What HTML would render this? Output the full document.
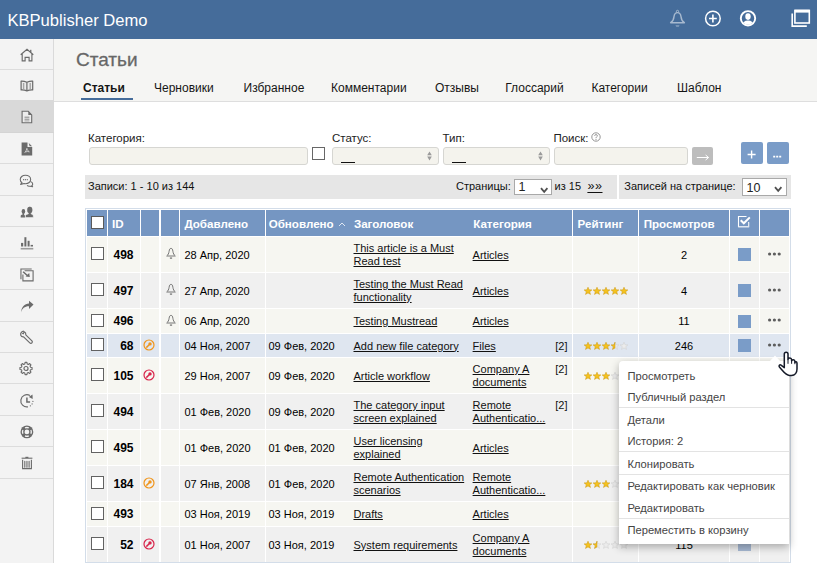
<!DOCTYPE html>
<html><head><meta charset="utf-8">
<style>
*{box-sizing:border-box;margin:0;padding:0}
html,body{width:817px;height:563px;overflow:hidden;background:#fff;font-family:"Liberation Sans",sans-serif;color:#000}
.a{position:absolute}
.t{position:absolute;white-space:nowrap;line-height:1}
svg{position:absolute;overflow:visible}
.u{text-decoration:underline;text-underline-offset:1px}
</style></head><body>
<div class="a" style="left:0;top:0;width:817px;height:39px;background:#456c9a"></div>
<div class="t " style="left:7.4px;top:13.35px;font-size:16.6px;color:#fff">KBPublisher Demo</div>
<svg style="left:669px;top:9px" width="17" height="19" viewBox="0 0 17 19"><circle cx="8.5" cy="2.4" r="1.1" fill="none" stroke="#a7b9cf" stroke-width="1"/><path d="M8.5 3.6 C6.3 3.6 5.3 5.2 5 7.6 C4.7 10.6 4.3 12.2 1.6 13.7 H15.4 C12.7 12.2 12.3 10.6 12 7.6 C11.7 5.2 10.7 3.6 8.5 3.6Z" fill="none" stroke="#a7b9cf" stroke-width="1.4" stroke-linejoin="round"/><path d="M6.5 16.4 H10.5 C10 18 7 18 6.5 16.4Z" fill="#a7b9cf"/></svg>
<svg style="left:704px;top:10px" width="18" height="18" viewBox="0 0 18 18"><circle cx="8.9" cy="8.5" r="7.3" fill="none" stroke="#fff" stroke-width="1.5"/><path d="M8.9 4.6 V12.4 M5 8.5 H12.8" stroke="#fff" stroke-width="1.6"/></svg>
<svg style="left:739px;top:9px" width="18" height="19" viewBox="0 0 18 19"><defs><clipPath id="uc"><circle cx="9" cy="9.3" r="6.4"/></clipPath></defs><circle cx="9" cy="9.3" r="7.2" fill="none" stroke="#fff" stroke-width="1.9"/><g clip-path="url(#uc)"><ellipse cx="9" cy="7.6" rx="2.7" ry="3.3" fill="#fff"/><ellipse cx="9" cy="16.6" rx="6" ry="5" fill="#fff"/></g></svg>
<svg style="left:791px;top:9px" width="19" height="19" viewBox="0 0 19 19"><rect x="3.9" y="1.4" width="14.4" height="12.6" fill="none" stroke="#fff" stroke-width="1.6"/><rect x="3.9" y="0.8" width="14.4" height="2.8" fill="#fff"/><path d="M1.2 4.5 V17.1 H15.8" fill="none" stroke="#fff" stroke-width="1.6"/></svg>
<div class="a" style="left:0;top:39px;width:54px;height:524px;background:#f3f3f3;border-right:1px solid #dadada"></div>
<div class="a" style="left:0;top:69px;width:53px;height:1px;background:#dcdcdc"></div>
<div class="a" style="left:0;top:100px;width:54px;height:33px;border-bottom:1px solid #d4d4d4;background:#d9d9d9"></div>
<div class="a" style="left:0;top:163px;width:53px;height:1px;background:#dcdcdc"></div>
<div class="a" style="left:0;top:195px;width:53px;height:1px;background:#dcdcdc"></div>
<div class="a" style="left:0;top:226px;width:53px;height:1px;background:#dcdcdc"></div>
<div class="a" style="left:0;top:257px;width:53px;height:1px;background:#dcdcdc"></div>
<div class="a" style="left:0;top:289px;width:53px;height:1px;background:#dcdcdc"></div>
<div class="a" style="left:0;top:321px;width:53px;height:1px;background:#dcdcdc"></div>
<div class="a" style="left:0;top:352px;width:53px;height:1px;background:#dcdcdc"></div>
<div class="a" style="left:0;top:383px;width:53px;height:1px;background:#dcdcdc"></div>
<div class="a" style="left:0;top:415px;width:53px;height:1px;background:#dcdcdc"></div>
<div class="a" style="left:0;top:446px;width:53px;height:1px;background:#dcdcdc"></div>
<div class="a" style="left:0;top:478px;width:53px;height:1px;background:#dcdcdc"></div>
<svg style="left:19.50px;top:47.50px" width="14" height="14" viewBox="0 0 14 14"><path d="M0.7 6.8 L7 1.2 L13.3 6.8 M2.2 5.6 V12.8 H5.1 V9.3 H9.1 V12.8 H11.9 V5.6" fill="none" stroke="#6b6b6b" stroke-width="1.15" stroke-linejoin="miter"/><rect x="10.1" y="1.8" width="1.3" height="2.6" fill="#6b6b6b"/></svg>
<svg style="left:19.50px;top:79.35px" width="14" height="14" viewBox="0 0 14 14"><path d="M1.1 2.1 C2.8 2 5.1 2.4 6.9 3.2 V11.9 C5.1 11.2 2.8 10.9 1.1 11Z M12.7 2.1 C11 2 8.7 2.4 6.9 3.2 V11.9 C8.7 11.2 11 10.9 12.7 11Z" fill="#ececec" stroke="#6b6b6b" stroke-width="1.2" stroke-linejoin="round"/><path d="M3.6 3.9 V10 M10.2 3.9 V10" stroke="#a5a5a5" stroke-width="1.4"/></svg>
<svg style="left:19.50px;top:110.40px" width="14" height="14" viewBox="0 0 14 14"><path d="M2.1 1.2 H8.3 L11.7 4.9 V12.8 H2.1 Z" fill="#ececec" stroke="#6b6b6b" stroke-width="1.1" stroke-linejoin="miter"/><path d="M8.3 1.2 V4.9 H11.7Z" fill="#6b6b6b"/><path d="M4.5 7.2 H9.4 M4.5 9.2 H9.4" stroke="#7a7a7a" stroke-width="0.9"/><path d="M4.5 10.9 H9.4" stroke="#b0b0b0" stroke-width="1.2"/></svg>
<svg style="left:19.50px;top:141.85px" width="14" height="14" viewBox="0 0 14 14"><path d="M1.6 0.6 H7.5 V4.95 H12.2 V13.6 H1.6Z" fill="#6b6b6b"/><path d="M8.7 0.9 L12.1 4.2 H9.6 Z" fill="#6b6b6b"/><path d="M6.9 6.3 C6.6 8 5.8 9.6 4.7 10.8 M5.6 9.9 C6.8 9.5 8.2 9.4 9.3 9.8 M6.9 6.3 C7.2 7.8 8 9 9.3 9.8" fill="none" stroke="#e0e0e0" stroke-width="0.8"/></svg>
<svg style="left:19.00px;top:173.60px" width="15" height="14" viewBox="0 0 15 14"><path d="M6.45 1.3 C3.4 1.3 1.25 3.2 1.25 5.5 C1.25 6.9 1.9 8 3 8.7 L1.6 10.4 L5.2 9.5 C5.6 9.6 6 9.7 6.45 9.7 C9.5 9.7 11.65 7.8 11.65 5.5 C11.65 3.2 9.5 1.3 6.45 1.3Z" fill="none" stroke="#6b6b6b" stroke-width="1.1" stroke-linejoin="round"/><path d="M11.4 7.6 C12.9 8.1 13.7 9 13.7 10 C13.7 10.9 13.3 11.5 12.8 11.9 L13.6 12.6 L11 12.2 C9.8 12.4 8.6 12 8.2 11.3" fill="none" stroke="#6b6b6b" stroke-width="1.1" stroke-linejoin="round"/><circle cx="4.6" cy="5.7" r="0.65" fill="#6b6b6b"/><circle cx="6.45" cy="5.7" r="0.65" fill="#6b6b6b"/><circle cx="8.3" cy="5.7" r="0.65" fill="#6b6b6b"/></svg>
<svg style="left:19.50px;top:204.75px" width="14" height="14" viewBox="0 0 14 14"><ellipse cx="3.4" cy="6.4" rx="1.8" ry="2.3" fill="#6b6b6b"/><path d="M2.6 8 V9.6 C1.4 9.8 0.7 10.3 0.7 11 V12.6 H5 V11 C5 10.4 4.6 10 4.1 9.7 V8Z" fill="#6b6b6b"/><ellipse cx="9.8" cy="5" rx="2.5" ry="3.2" fill="#6b6b6b" stroke="#f3f3f3" stroke-width="0.6"/><path d="M8.3 7.2 V9 C6.4 9.3 5.4 10 5.4 11 V12.6 H13.3 V11 C13.3 10 12.3 9.3 11.2 9 V7.2Z" fill="#6b6b6b" stroke="#f3f3f3" stroke-width="0.6"/><ellipse cx="9.8" cy="5" rx="2.5" ry="3.2" fill="#6b6b6b"/></svg>
<svg style="left:19.50px;top:236.20px" width="14" height="14" viewBox="0 0 14 14"><rect x="1.05" y="6.9" width="2.15" height="3.6" fill="#6b6b6b"/><rect x="4.4" y="1.2" width="2" height="9.3" fill="#6b6b6b"/><rect x="7.6" y="4.8" width="2" height="5.7" fill="#6b6b6b"/><rect x="10.6" y="8.9" width="2.4" height="1.6" fill="#6b6b6b"/><rect x="0.7" y="11.9" width="12.6" height="1.6" fill="#9a9a9a"/></svg>
<svg style="left:19.50px;top:267.65px" width="14" height="14" viewBox="0 0 14 14"><path d="M11.7 0.95 H0.95 V11.3" fill="none" stroke="#6b6b6b" stroke-width="1.1"/><path d="M4.6 2.75 H13.1 V12.9 H2.9 V6.6" fill="none" stroke="#6b6b6b" stroke-width="1.1"/><path d="M3.1 3.7 L7.6 7.7" stroke="#6b6b6b" stroke-width="1.5"/><path d="M9.8 8.9 L5.6 8.4 L9.2 5.1Z" fill="#6b6b6b"/></svg>
<svg style="left:19.50px;top:299.90px" width="14" height="14" viewBox="0 0 14 14"><path d="M1 12.5 C2 8.2 5.2 6 9 6.2 V9 L13.5 4.6 L9 0.8 V3.5 C4.5 3.6 1.5 7 1 12.5Z" fill="#6b6b6b"/></svg>
<svg style="left:18.80px;top:329.75px" width="14" height="14" viewBox="0 0 14 14"><path d="M4.8 1.2 C2.8 1.3 1.2 3.2 1.8 5.2 C2.2 6.3 3.4 7 4.6 6.9 L10.8 12.9 C11.4 13.5 12.4 13.5 12.9 12.9 C13.5 12.3 13.4 11.4 12.9 10.9 L6.8 4.8 C7 3.6 6.4 2.3 5.3 1.8 L4.3 3.8 L3.2 3.3" fill="none" stroke="#6b6b6b" stroke-width="1.2" stroke-linejoin="round"/></svg>
<svg style="left:19.00px;top:361.10px" width="14" height="15" viewBox="0 0 14 15"><g transform="translate(7 7.5) scale(0.92) translate(-7 -7.5)"><path d="M6 0.8 H8 L8.3 2.5 L9.6 3.1 L11 2.1 L12.4 3.5 L11.4 4.9 L12 6.2 L13.6 6.5 V8.5 L12 8.8 L11.4 10.1 L12.4 11.5 L11 12.9 L9.6 11.9 L8.3 12.5 L8 14.2 H6 L5.7 12.5 L4.4 11.9 L3 12.9 L1.6 11.5 L2.6 10.1 L2 8.8 L0.4 8.5 V6.5 L2 6.2 L2.6 4.9 L1.6 3.5 L3 2.1 L4.4 3.1 L5.7 2.5 Z" fill="none" stroke="#6b6b6b" stroke-width="1.2" stroke-linejoin="round"/><circle cx="7" cy="7.5" r="2.2" fill="none" stroke="#6b6b6b" stroke-width="1.3"/></g></svg>
<svg style="left:19.50px;top:394.35px" width="14" height="14" viewBox="0 0 14 14"><path d="M9.95 1.57 A6.1 6.1 0 1 0 7.96 12.86" fill="none" stroke="#6b6b6b" stroke-width="1.2"/><circle cx="10.4" cy="11.85" r="0.65" fill="#6b6b6b"/><circle cx="12.1" cy="9.9" r="0.6" fill="#6b6b6b"/><circle cx="12.9" cy="7.4" r="0.6" fill="#6b6b6b"/><path d="M8.8 3.1 L12.5 0.4 L12.7 4.9Z" fill="#6b6b6b"/><path d="M6.9 3.6 V8 H10.1" fill="none" stroke="#6b6b6b" stroke-width="1.5"/></svg>
<svg style="left:19.50px;top:424.90px" width="14" height="14" viewBox="0 0 14 14"><circle cx="6.9" cy="6.9" r="6.4" fill="#6b6b6b"/><circle cx="6.9" cy="6.9" r="2.4" fill="#f3f3f3"/><path d="M5.04 2.91 A4.4 4.4 0 0 1 8.76 2.91 M10.89 5.04 A4.4 4.4 0 0 1 10.89 8.76 M8.76 10.89 A4.4 4.4 0 0 1 5.04 10.89 M2.91 8.76 A4.4 4.4 0 0 1 2.91 5.04" fill="none" stroke="#f3f3f3" stroke-width="1.3"/></svg>
<svg style="left:19.50px;top:456.35px" width="14" height="14" viewBox="0 0 14 14"><path d="M1.6 2.2 H12.4" stroke="#6b6b6b" stroke-width="1.1"/><rect x="5.4" y="0.8" width="3" height="1.2" fill="#6b6b6b"/><path d="M2.6 3.8 V12.6 H11.4 V3.8" fill="none" stroke="#6b6b6b" stroke-width="1.1"/><path d="M4.8 5.2 V11.3 M6.95 5.2 V11.3 M9.1 5.2 V11.3" stroke="#6b6b6b" stroke-width="1.1" stroke-linecap="round"/></svg>
<div class="a" style="left:54px;top:39px;width:763px;height:63px;background:#f5f5f3;border-bottom:1px solid #dedede"></div>
<div class="t " style="left:76px;top:49.72px;font-size:19px;color:#676767;-webkit-text-stroke:0.3px #676767">Статьи</div>
<div class="t " style="left:83px;top:82.44px;font-size:12px;color:#151515;font-weight:bold;">Статьи</div>
<div class="t " style="left:154px;top:82.44px;font-size:12px;color:#151515;">Черновики</div>
<div class="t " style="left:243.5px;top:82.44px;font-size:12px;color:#151515;">Избранное</div>
<div class="t " style="left:331px;top:82.44px;font-size:12px;color:#151515;">Комментарии</div>
<div class="t " style="left:435px;top:82.44px;font-size:12px;color:#151515;">Отзывы</div>
<div class="t " style="left:505.3px;top:82.44px;font-size:12px;color:#151515;">Глоссарий</div>
<div class="t " style="left:591.4px;top:82.44px;font-size:12px;color:#151515;">Категории</div>
<div class="t " style="left:677px;top:82.44px;font-size:12px;color:#151515;">Шаблон</div>
<div class="a" style="left:81px;top:97.5px;width:52px;height:2.5px;background:#456c9a"></div>
<div class="t " style="left:88px;top:133.27px;font-size:11.5px;color:#222">Категория:</div>
<div class="t " style="left:332px;top:133.27px;font-size:11.5px;color:#222">Статус:</div>
<div class="t " style="left:442.5px;top:133.27px;font-size:11.5px;color:#222">Тип:</div>
<div class="t " style="left:553.4px;top:133.27px;font-size:11.5px;color:#222">Поиск:</div>
<svg style="left:591px;top:132px" width="10" height="10" viewBox="0 0 10 10"><circle cx="5" cy="5" r="4.2" fill="none" stroke="#8a8a8a" stroke-width="0.9"/><path d="M3.6 3.8 C3.6 2.2 6.4 2.2 6.4 3.8 C6.4 4.8 5 4.8 5 6.2" fill="none" stroke="#8a8a8a" stroke-width="0.9"/><circle cx="5" cy="7.6" r="0.55" fill="#8a8a8a"/></svg>
<div class="a" style="left:89px;top:147px;width:219px;height:18px;background:#f4f3ed;border:1px solid #d6d6d2;border-radius:3px"></div>
<div class="a" style="left:312px;top:147px;width:13px;height:13px;border:1.3px solid #676767;background:#fff"></div>
<div class="a" style="left:332px;top:147px;width:107px;height:18px;background:#f4f3ed;border:1px solid #d6d6d2;border-radius:3px"></div>
<div class="a" style="left:443px;top:147px;width:107px;height:18px;background:#f4f3ed;border:1px solid #d6d6d2;border-radius:3px"></div>
<div class="a" style="left:554px;top:147px;width:134px;height:18px;background:#f4f3ed;border:1px solid #d6d6d2;border-radius:3px"></div>
<div class="a" style="left:341px;top:161.6px;width:14px;height:1.5px;background:#111"></div>
<svg style="left:427px;top:151.3px" width="6" height="10" viewBox="0 0 6 10"><path d="M0.2 4.3 L2.5 0.4 L4.8 4.3Z M0.2 5.6 L2.5 9.4 L4.8 5.6Z" fill="#9a9a9a"/></svg>
<div class="a" style="left:452px;top:161.6px;width:14px;height:1.5px;background:#111"></div>
<svg style="left:538px;top:151.3px" width="6" height="10" viewBox="0 0 6 10"><path d="M0.2 4.3 L2.5 0.4 L4.8 4.3Z M0.2 5.6 L2.5 9.4 L4.8 5.6Z" fill="#9a9a9a"/></svg>
<div class="a" style="left:692px;top:147px;width:21px;height:18px;background:#bdbdbd;border-radius:2px"></div>
<svg style="left:696px;top:153px" width="14" height="8" viewBox="0 0 14 8"><path d="M0.8 4.5 H12.6 M9.6 2 L12.6 4.5 L9.6 7" fill="none" stroke="#fff" stroke-width="1"/></svg>
<div class="a" style="left:741px;top:142px;width:22px;height:22px;background:#7a9cc8;border-radius:2px"></div>
<div class="a" style="left:767px;top:142px;width:22px;height:22px;background:#7a9cc8;border-radius:2px"></div>
<svg style="left:745px;top:148px" width="14" height="14" viewBox="0 0 14 14"><path d="M6.6 2.5 V10.5 M2.6 6.5 H10.6" stroke="#fff" stroke-width="1.4"/></svg>
<svg style="left:771px;top:148px" width="14" height="14" viewBox="0 0 14 14"><path d="M2.2 8.6 H4.2 M5.2 8.6 H7.2 M8.2 8.6 H10.2" stroke="#fff" stroke-width="1.6"/></svg>
<div class="a" style="left:85px;top:175px;width:532px;height:24px;background:#e6e6e6"></div>
<div class="a" style="left:619px;top:175px;width:172px;height:24px;background:#e6e6e6"></div>
<div class="t " style="left:88px;top:180.89px;font-size:11px;color:#111">Записи: 1 - 10 из 144</div>
<div class="t " style="left:456px;top:180.89px;font-size:11px;color:#111">Страницы:</div>
<div class="a" style="left:514px;top:179px;width:37.5px;height:16px;background:#fff;border:1px solid #a9a9a9"></div>
<div class="t " style="left:518.5px;top:181.22px;font-size:12.5px;color:#222">1</div>
<svg style="left:539.5px;top:186.5px" width="9" height="7" viewBox="0 0 9 7"><path d="M1 1.2 L4.2 4.8 L7.4 1.2" fill="none" stroke="#505050" stroke-width="1.8"/></svg>
<div class="t " style="left:554.6px;top:180.89px;font-size:11px;color:#111">из 15</div>
<div class="t u" style="left:587.4px;top:179.82px;font-size:12.5px;color:#111;letter-spacing:0.6px;text-underline-offset:2px">»»</div>
<div class="t " style="left:624.3px;top:180.89px;font-size:11px;color:#111">Записей на странице:</div>
<div class="a" style="left:742px;top:178px;width:44.5px;height:18px;background:#fff;border:1px solid #a9a9a9"></div>
<div class="t " style="left:746.5px;top:181.62px;font-size:12.5px;color:#222">10</div>
<svg style="left:774px;top:186px" width="9" height="7" viewBox="0 0 9 7"><path d="M1 1.2 L4.2 4.8 L7.4 1.2" fill="none" stroke="#505050" stroke-width="1.8"/></svg>
<div class="a" style="left:85px;top:208px;width:706px;height:355px;border:1px solid #d3dde9;border-bottom:none;background:#fff"></div>
<div class="a" style="left:85px;top:562px;width:706px;height:1px;background:#d3dde9"></div>
<div class="a" style="left:87px;top:210px;width:20px;height:26px;background:#7596c2"></div>
<div class="a" style="left:108px;top:210px;width:32px;height:26px;background:#7596c2"></div>
<div class="a" style="left:141px;top:210px;width:18px;height:26px;background:#7596c2"></div>
<div class="a" style="left:161px;top:210px;width:18px;height:26px;background:#7596c2"></div>
<div class="a" style="left:180px;top:210px;width:85px;height:26px;background:#7596c2"></div>
<div class="a" style="left:266px;top:210px;width:306px;height:26px;background:#7596c2"></div>
<div class="a" style="left:573px;top:210px;width:65px;height:26px;background:#7596c2"></div>
<div class="a" style="left:639px;top:210px;width:90px;height:26px;background:#7596c2"></div>
<div class="a" style="left:730px;top:210px;width:29px;height:26px;background:#7596c2"></div>
<div class="a" style="left:760px;top:210px;width:29px;height:26px;background:#7596c2"></div>
<div class="a" style="left:87px;top:237px;width:20px;height:35px;background:#f6f6f1"></div>
<div class="a" style="left:108px;top:237px;width:32px;height:35px;background:#f6f6f1"></div>
<div class="a" style="left:141px;top:237px;width:18px;height:35px;background:#f6f6f1"></div>
<div class="a" style="left:161px;top:237px;width:18px;height:35px;background:#f6f6f1"></div>
<div class="a" style="left:180px;top:237px;width:85px;height:35px;background:#f6f6f1"></div>
<div class="a" style="left:266px;top:237px;width:306px;height:35px;background:#f6f6f1"></div>
<div class="a" style="left:573px;top:237px;width:65px;height:35px;background:#f6f6f1"></div>
<div class="a" style="left:639px;top:237px;width:90px;height:35px;background:#f6f6f1"></div>
<div class="a" style="left:730px;top:237px;width:29px;height:35px;background:#f6f6f1"></div>
<div class="a" style="left:760px;top:237px;width:29px;height:35px;background:#f6f6f1"></div>
<div class="a" style="left:87px;top:273px;width:20px;height:35px;background:#f0f0f0"></div>
<div class="a" style="left:108px;top:273px;width:32px;height:35px;background:#f0f0f0"></div>
<div class="a" style="left:141px;top:273px;width:18px;height:35px;background:#f0f0f0"></div>
<div class="a" style="left:161px;top:273px;width:18px;height:35px;background:#f0f0f0"></div>
<div class="a" style="left:180px;top:273px;width:85px;height:35px;background:#f0f0f0"></div>
<div class="a" style="left:266px;top:273px;width:306px;height:35px;background:#f0f0f0"></div>
<div class="a" style="left:573px;top:273px;width:65px;height:35px;background:#f0f0f0"></div>
<div class="a" style="left:639px;top:273px;width:90px;height:35px;background:#f0f0f0"></div>
<div class="a" style="left:730px;top:273px;width:29px;height:35px;background:#f0f0f0"></div>
<div class="a" style="left:760px;top:273px;width:29px;height:35px;background:#f0f0f0"></div>
<div class="a" style="left:87px;top:309px;width:20px;height:24px;background:#f6f6f1"></div>
<div class="a" style="left:108px;top:309px;width:32px;height:24px;background:#f6f6f1"></div>
<div class="a" style="left:141px;top:309px;width:18px;height:24px;background:#f6f6f1"></div>
<div class="a" style="left:161px;top:309px;width:18px;height:24px;background:#f6f6f1"></div>
<div class="a" style="left:180px;top:309px;width:85px;height:24px;background:#f6f6f1"></div>
<div class="a" style="left:266px;top:309px;width:306px;height:24px;background:#f6f6f1"></div>
<div class="a" style="left:573px;top:309px;width:65px;height:24px;background:#f6f6f1"></div>
<div class="a" style="left:639px;top:309px;width:90px;height:24px;background:#f6f6f1"></div>
<div class="a" style="left:730px;top:309px;width:29px;height:24px;background:#f6f6f1"></div>
<div class="a" style="left:760px;top:309px;width:29px;height:24px;background:#f6f6f1"></div>
<div class="a" style="left:87px;top:334px;width:20px;height:23px;background:#dfe6f0"></div>
<div class="a" style="left:108px;top:334px;width:32px;height:23px;background:#dfe6f0"></div>
<div class="a" style="left:141px;top:334px;width:18px;height:23px;background:#dfe6f0"></div>
<div class="a" style="left:161px;top:334px;width:18px;height:23px;background:#dfe6f0"></div>
<div class="a" style="left:180px;top:334px;width:85px;height:23px;background:#dfe6f0"></div>
<div class="a" style="left:266px;top:334px;width:306px;height:23px;background:#dfe6f0"></div>
<div class="a" style="left:573px;top:334px;width:65px;height:23px;background:#dfe6f0"></div>
<div class="a" style="left:639px;top:334px;width:90px;height:23px;background:#dfe6f0"></div>
<div class="a" style="left:730px;top:334px;width:29px;height:23px;background:#dfe6f0"></div>
<div class="a" style="left:760px;top:334px;width:29px;height:23px;background:#dfe6f0"></div>
<div class="a" style="left:87px;top:358px;width:20px;height:35px;background:#f6f6f1"></div>
<div class="a" style="left:108px;top:358px;width:32px;height:35px;background:#f6f6f1"></div>
<div class="a" style="left:141px;top:358px;width:18px;height:35px;background:#f6f6f1"></div>
<div class="a" style="left:161px;top:358px;width:18px;height:35px;background:#f6f6f1"></div>
<div class="a" style="left:180px;top:358px;width:85px;height:35px;background:#f6f6f1"></div>
<div class="a" style="left:266px;top:358px;width:306px;height:35px;background:#f6f6f1"></div>
<div class="a" style="left:573px;top:358px;width:65px;height:35px;background:#f6f6f1"></div>
<div class="a" style="left:639px;top:358px;width:90px;height:35px;background:#f6f6f1"></div>
<div class="a" style="left:730px;top:358px;width:29px;height:35px;background:#f6f6f1"></div>
<div class="a" style="left:760px;top:358px;width:29px;height:35px;background:#f6f6f1"></div>
<div class="a" style="left:87px;top:394px;width:20px;height:35px;background:#f0f0f0"></div>
<div class="a" style="left:108px;top:394px;width:32px;height:35px;background:#f0f0f0"></div>
<div class="a" style="left:141px;top:394px;width:18px;height:35px;background:#f0f0f0"></div>
<div class="a" style="left:161px;top:394px;width:18px;height:35px;background:#f0f0f0"></div>
<div class="a" style="left:180px;top:394px;width:85px;height:35px;background:#f0f0f0"></div>
<div class="a" style="left:266px;top:394px;width:306px;height:35px;background:#f0f0f0"></div>
<div class="a" style="left:573px;top:394px;width:65px;height:35px;background:#f0f0f0"></div>
<div class="a" style="left:639px;top:394px;width:90px;height:35px;background:#f0f0f0"></div>
<div class="a" style="left:730px;top:394px;width:29px;height:35px;background:#f0f0f0"></div>
<div class="a" style="left:760px;top:394px;width:29px;height:35px;background:#f0f0f0"></div>
<div class="a" style="left:87px;top:430px;width:20px;height:35px;background:#f6f6f1"></div>
<div class="a" style="left:108px;top:430px;width:32px;height:35px;background:#f6f6f1"></div>
<div class="a" style="left:141px;top:430px;width:18px;height:35px;background:#f6f6f1"></div>
<div class="a" style="left:161px;top:430px;width:18px;height:35px;background:#f6f6f1"></div>
<div class="a" style="left:180px;top:430px;width:85px;height:35px;background:#f6f6f1"></div>
<div class="a" style="left:266px;top:430px;width:306px;height:35px;background:#f6f6f1"></div>
<div class="a" style="left:573px;top:430px;width:65px;height:35px;background:#f6f6f1"></div>
<div class="a" style="left:639px;top:430px;width:90px;height:35px;background:#f6f6f1"></div>
<div class="a" style="left:730px;top:430px;width:29px;height:35px;background:#f6f6f1"></div>
<div class="a" style="left:760px;top:430px;width:29px;height:35px;background:#f6f6f1"></div>
<div class="a" style="left:87px;top:466px;width:20px;height:35px;background:#f0f0f0"></div>
<div class="a" style="left:108px;top:466px;width:32px;height:35px;background:#f0f0f0"></div>
<div class="a" style="left:141px;top:466px;width:18px;height:35px;background:#f0f0f0"></div>
<div class="a" style="left:161px;top:466px;width:18px;height:35px;background:#f0f0f0"></div>
<div class="a" style="left:180px;top:466px;width:85px;height:35px;background:#f0f0f0"></div>
<div class="a" style="left:266px;top:466px;width:306px;height:35px;background:#f0f0f0"></div>
<div class="a" style="left:573px;top:466px;width:65px;height:35px;background:#f0f0f0"></div>
<div class="a" style="left:639px;top:466px;width:90px;height:35px;background:#f0f0f0"></div>
<div class="a" style="left:730px;top:466px;width:29px;height:35px;background:#f0f0f0"></div>
<div class="a" style="left:760px;top:466px;width:29px;height:35px;background:#f0f0f0"></div>
<div class="a" style="left:87px;top:502px;width:20px;height:24px;background:#f6f6f1"></div>
<div class="a" style="left:108px;top:502px;width:32px;height:24px;background:#f6f6f1"></div>
<div class="a" style="left:141px;top:502px;width:18px;height:24px;background:#f6f6f1"></div>
<div class="a" style="left:161px;top:502px;width:18px;height:24px;background:#f6f6f1"></div>
<div class="a" style="left:180px;top:502px;width:85px;height:24px;background:#f6f6f1"></div>
<div class="a" style="left:266px;top:502px;width:306px;height:24px;background:#f6f6f1"></div>
<div class="a" style="left:573px;top:502px;width:65px;height:24px;background:#f6f6f1"></div>
<div class="a" style="left:639px;top:502px;width:90px;height:24px;background:#f6f6f1"></div>
<div class="a" style="left:730px;top:502px;width:29px;height:24px;background:#f6f6f1"></div>
<div class="a" style="left:760px;top:502px;width:29px;height:24px;background:#f6f6f1"></div>
<div class="a" style="left:87px;top:527px;width:20px;height:35px;background:#f0f0f0"></div>
<div class="a" style="left:108px;top:527px;width:32px;height:35px;background:#f0f0f0"></div>
<div class="a" style="left:141px;top:527px;width:18px;height:35px;background:#f0f0f0"></div>
<div class="a" style="left:161px;top:527px;width:18px;height:35px;background:#f0f0f0"></div>
<div class="a" style="left:180px;top:527px;width:85px;height:35px;background:#f0f0f0"></div>
<div class="a" style="left:266px;top:527px;width:306px;height:35px;background:#f0f0f0"></div>
<div class="a" style="left:573px;top:527px;width:65px;height:35px;background:#f0f0f0"></div>
<div class="a" style="left:639px;top:527px;width:90px;height:35px;background:#f0f0f0"></div>
<div class="a" style="left:730px;top:527px;width:29px;height:35px;background:#f0f0f0"></div>
<div class="a" style="left:760px;top:527px;width:29px;height:35px;background:#f0f0f0"></div>
<div class="a" style="left:91px;top:216px;width:13px;height:13px;background:#fff;border:1.5px solid #5a5a5a"></div>
<div class="t " style="left:112px;top:218.18px;font-size:11.6px;color:#fff;font-weight:bold">ID</div>
<div class="t " style="left:184.4px;top:218.18px;font-size:11.6px;color:#fff;font-weight:bold">Добавлено</div>
<div class="t " style="left:268.7px;top:218.18px;font-size:11.6px;color:#fff;font-weight:bold">Обновлено</div>
<div class="t " style="left:353.9px;top:218.18px;font-size:11.6px;color:#fff;font-weight:bold">Заголовок</div>
<div class="t " style="left:473.2px;top:218.18px;font-size:11.6px;color:#fff;font-weight:bold">Категория</div>
<div class="t " style="left:577.6px;top:218.18px;font-size:11.6px;color:#fff;font-weight:bold">Рейтинг</div>
<div class="t " style="left:643.7px;top:218.18px;font-size:11.6px;color:#fff;font-weight:bold">Просмотров</div>
<svg style="left:338px;top:221px" width="8" height="6" viewBox="0 0 8 6"><path d="M1 5 L4 2 L7 5" fill="none" stroke="#dfe7f2" stroke-width="1"/></svg>
<svg style="left:737px;top:215.4px" width="15" height="13" viewBox="0 0 15 13"><path d="M9.5 1.5 H1.5 V11.7 H11.6 V7" fill="none" stroke="#fff" stroke-width="1.1"/><path d="M11.6 7.5 V11.7 H1.5" fill="none" stroke="#dfe6f0" stroke-width="1.1"/><path d="M3.7 5.3 L6.8 8.3 L12.8 2.4" fill="none" stroke="#fff" stroke-width="2"/></svg>
<div class="a" style="left:91px;top:247.0px;width:13px;height:13px;background:#fff;border:1.5px solid #626262"></div>
<div class="t" style="left:100px;width:33.5px;text-align:right;top:248.84px;font-size:12px;font-weight:bold">498</div>
<svg style="left:165.5px;top:247.0px" width="10" height="13" viewBox="0 0 10 13"><path d="M5 1.3 C3.9 1.3 3.4 2.4 3.1 4.3 C2.8 6.4 2.1 7.9 0.7 9 H9.3 C7.9 7.9 7.2 6.4 6.9 4.3 C6.6 2.4 6.1 1.3 5 1.3Z" fill="none" stroke="#777" stroke-width="1" stroke-linejoin="round"/><path d="M3.9 11.1 H6.1" stroke="#777" stroke-width="1.3"/></svg>
<div class="t " style="left:184.4px;top:249.69px;font-size:11px;">28 Апр, 2020</div>
<div class="t u" style="left:353.5px;top:242.89px;font-size:11px;color:#111">This article is a Must</div>
<div class="t u" style="left:353.5px;top:255.89px;font-size:11px;color:#111">Read test</div>
<div class="t u" style="left:472.6px;top:249.69px;font-size:11px;color:#111">Articles</div>
<div class="t" style="left:639px;width:90px;text-align:center;top:249.69px;font-size:11px">2</div>
<div class="a" style="left:738px;top:248.0px;width:13px;height:13px;background:#7a9cc8"></div>
<svg style="left:767px;top:251.8px" width="15" height="4" viewBox="0 0 15 4"><circle cx="2.6" cy="2" r="1.6" fill="#5e5e5e"/><circle cx="7.4" cy="2" r="1.6" fill="#5e5e5e"/><circle cx="12.2" cy="2" r="1.6" fill="#5e5e5e"/></svg>
<div class="a" style="left:91px;top:283.0px;width:13px;height:13px;background:#fff;border:1.5px solid #626262"></div>
<div class="t" style="left:100px;width:33.5px;text-align:right;top:284.84px;font-size:12px;font-weight:bold">497</div>
<svg style="left:165.5px;top:283.0px" width="10" height="13" viewBox="0 0 10 13"><path d="M5 1.3 C3.9 1.3 3.4 2.4 3.1 4.3 C2.8 6.4 2.1 7.9 0.7 9 H9.3 C7.9 7.9 7.2 6.4 6.9 4.3 C6.6 2.4 6.1 1.3 5 1.3Z" fill="none" stroke="#777" stroke-width="1" stroke-linejoin="round"/><path d="M3.9 11.1 H6.1" stroke="#777" stroke-width="1.3"/></svg>
<div class="t " style="left:184.4px;top:285.69px;font-size:11px;">27 Апр, 2020</div>
<div class="t u" style="left:353.5px;top:278.89px;font-size:11px;color:#111">Testing the Must Read</div>
<div class="t u" style="left:353.5px;top:291.89px;font-size:11px;color:#111">functionality</div>
<div class="t u" style="left:472.6px;top:285.69px;font-size:11px;color:#111">Articles</div>
<svg style="left:584px;top:286.9px" width="46" height="8" viewBox="0 0 46 8"><polygon transform="translate(0.00,0)" points="4,0.2 5.1,2.8 7.9,2.9 5.7,4.7 6.5,7.4 4,5.9 1.5,7.4 2.3,4.7 0.1,2.9 2.9,2.8" fill="#f5c21e" stroke="#c99510" stroke-width="0.5"/><polygon transform="translate(9.00,0)" points="4,0.2 5.1,2.8 7.9,2.9 5.7,4.7 6.5,7.4 4,5.9 1.5,7.4 2.3,4.7 0.1,2.9 2.9,2.8" fill="#f5c21e" stroke="#c99510" stroke-width="0.5"/><polygon transform="translate(18.00,0)" points="4,0.2 5.1,2.8 7.9,2.9 5.7,4.7 6.5,7.4 4,5.9 1.5,7.4 2.3,4.7 0.1,2.9 2.9,2.8" fill="#f5c21e" stroke="#c99510" stroke-width="0.5"/><polygon transform="translate(27.00,0)" points="4,0.2 5.1,2.8 7.9,2.9 5.7,4.7 6.5,7.4 4,5.9 1.5,7.4 2.3,4.7 0.1,2.9 2.9,2.8" fill="#f5c21e" stroke="#c99510" stroke-width="0.5"/><polygon transform="translate(36.00,0)" points="4,0.2 5.1,2.8 7.9,2.9 5.7,4.7 6.5,7.4 4,5.9 1.5,7.4 2.3,4.7 0.1,2.9 2.9,2.8" fill="#f5c21e" stroke="#c99510" stroke-width="0.5"/></svg>
<div class="t" style="left:639px;width:90px;text-align:center;top:285.69px;font-size:11px">4</div>
<div class="a" style="left:738px;top:284.0px;width:13px;height:13px;background:#7a9cc8"></div>
<svg style="left:767px;top:287.8px" width="15" height="4" viewBox="0 0 15 4"><circle cx="2.6" cy="2" r="1.6" fill="#5e5e5e"/><circle cx="7.4" cy="2" r="1.6" fill="#5e5e5e"/><circle cx="12.2" cy="2" r="1.6" fill="#5e5e5e"/></svg>
<div class="a" style="left:91px;top:313.5px;width:13px;height:13px;background:#fff;border:1.5px solid #626262"></div>
<div class="t" style="left:100px;width:33.5px;text-align:right;top:315.34px;font-size:12px;font-weight:bold">496</div>
<svg style="left:165.5px;top:313.5px" width="10" height="13" viewBox="0 0 10 13"><path d="M5 1.3 C3.9 1.3 3.4 2.4 3.1 4.3 C2.8 6.4 2.1 7.9 0.7 9 H9.3 C7.9 7.9 7.2 6.4 6.9 4.3 C6.6 2.4 6.1 1.3 5 1.3Z" fill="none" stroke="#777" stroke-width="1" stroke-linejoin="round"/><path d="M3.9 11.1 H6.1" stroke="#777" stroke-width="1.3"/></svg>
<div class="t " style="left:184.4px;top:316.19px;font-size:11px;">06 Апр, 2020</div>
<div class="t u" style="left:353.5px;top:316.19px;font-size:11px;color:#111">Testing Mustread</div>
<div class="t u" style="left:472.6px;top:316.19px;font-size:11px;color:#111">Articles</div>
<div class="t" style="left:639px;width:90px;text-align:center;top:316.19px;font-size:11px">11</div>
<div class="a" style="left:738px;top:314.5px;width:13px;height:13px;background:#7a9cc8"></div>
<svg style="left:767px;top:318.3px" width="15" height="4" viewBox="0 0 15 4"><circle cx="2.6" cy="2" r="1.6" fill="#5e5e5e"/><circle cx="7.4" cy="2" r="1.6" fill="#5e5e5e"/><circle cx="12.2" cy="2" r="1.6" fill="#5e5e5e"/></svg>
<div class="a" style="left:91px;top:338.0px;width:13px;height:13px;background:#fff;border:1.5px solid #626262"></div>
<div class="t" style="left:100px;width:33.5px;text-align:right;top:339.84px;font-size:12px;font-weight:bold">68</div>
<svg style="left:143px;top:338.5px" width="12" height="12" viewBox="0 0 12 12"><circle cx="6" cy="6" r="5" fill="none" stroke="#f0951c" stroke-width="1.2"/><circle cx="7" cy="4.9" r="1.7" fill="#f0951c"/><path d="M3.3 8.6 L6.2 5.8" stroke="#f0951c" stroke-width="1.5"/></svg>
<div class="t " style="left:184.4px;top:340.69px;font-size:11px;">04 Ноя, 2007</div>
<div class="t " style="left:268.5px;top:340.69px;font-size:11px;">09 Фев, 2020</div>
<div class="t u" style="left:353.5px;top:340.69px;font-size:11px;color:#111">Add new file category</div>
<div class="t u" style="left:472.6px;top:340.69px;font-size:11px;color:#111">Files</div>
<div class="t " style="left:555.3px;top:340.69px;font-size:11px;color:#111">[2]</div>
<svg style="left:584px;top:341.9px" width="46" height="8" viewBox="0 0 46 8"><polygon transform="translate(0.00,0)" points="4,0.2 5.1,2.8 7.9,2.9 5.7,4.7 6.5,7.4 4,5.9 1.5,7.4 2.3,4.7 0.1,2.9 2.9,2.8" fill="#f5c21e" stroke="#c99510" stroke-width="0.5"/><polygon transform="translate(9.00,0)" points="4,0.2 5.1,2.8 7.9,2.9 5.7,4.7 6.5,7.4 4,5.9 1.5,7.4 2.3,4.7 0.1,2.9 2.9,2.8" fill="#f5c21e" stroke="#c99510" stroke-width="0.5"/><polygon transform="translate(18.00,0)" points="4,0.2 5.1,2.8 7.9,2.9 5.7,4.7 6.5,7.4 4,5.9 1.5,7.4 2.3,4.7 0.1,2.9 2.9,2.8" fill="#f5c21e" stroke="#c99510" stroke-width="0.5"/><polygon transform="translate(27.00,0)" points="4,0.2 5.1,2.8 7.9,2.9 5.7,4.7 6.5,7.4 4,5.9 1.5,7.4 2.3,4.7 0.1,2.9 2.9,2.8" fill="#ececec" stroke="#cdcdcd" stroke-width="0.5"/><polygon transform="translate(27.00,0)" points="4,0.2 4,5.9 1.5,7.4 2.3,4.7 0.1,2.9 2.9,2.8" fill="#f5c21e" stroke="#c99510" stroke-width="0.5"/><polygon transform="translate(36.00,0)" points="4,0.2 5.1,2.8 7.9,2.9 5.7,4.7 6.5,7.4 4,5.9 1.5,7.4 2.3,4.7 0.1,2.9 2.9,2.8" fill="#ececec" stroke="#cdcdcd" stroke-width="0.5"/></svg>
<div class="t" style="left:639px;width:90px;text-align:center;top:340.69px;font-size:11px">246</div>
<div class="a" style="left:738px;top:339.0px;width:13px;height:13px;background:#7a9cc8"></div>
<svg style="left:767px;top:342.8px" width="15" height="4" viewBox="0 0 15 4"><circle cx="2.6" cy="2" r="1.6" fill="#5e5e5e"/><circle cx="7.4" cy="2" r="1.6" fill="#5e5e5e"/><circle cx="12.2" cy="2" r="1.6" fill="#5e5e5e"/></svg>
<div class="a" style="left:91px;top:368.0px;width:13px;height:13px;background:#fff;border:1.5px solid #626262"></div>
<div class="t" style="left:100px;width:33.5px;text-align:right;top:369.84px;font-size:12px;font-weight:bold">105</div>
<svg style="left:143px;top:368.5px" width="12" height="12" viewBox="0 0 12 12"><circle cx="6" cy="6" r="5" fill="none" stroke="#d8254b" stroke-width="1.2"/><circle cx="7" cy="4.9" r="1.7" fill="#d8254b"/><path d="M3.3 8.6 L6.2 5.8" stroke="#d8254b" stroke-width="1.5"/></svg>
<div class="t " style="left:184.4px;top:370.69px;font-size:11px;">29 Ноя, 2007</div>
<div class="t " style="left:268.5px;top:370.69px;font-size:11px;">09 Фев, 2020</div>
<div class="t u" style="left:353.5px;top:370.69px;font-size:11px;color:#111">Article workflow</div>
<div class="t u" style="left:472.6px;top:363.89px;font-size:11px;color:#111">Company A</div>
<div class="t u" style="left:472.6px;top:376.89px;font-size:11px;color:#111">documents</div>
<div class="t " style="left:555.3px;top:363.89px;font-size:11px;color:#111">[2]</div>
<svg style="left:584px;top:371.9px" width="46" height="8" viewBox="0 0 46 8"><polygon transform="translate(0.00,0)" points="4,0.2 5.1,2.8 7.9,2.9 5.7,4.7 6.5,7.4 4,5.9 1.5,7.4 2.3,4.7 0.1,2.9 2.9,2.8" fill="#f5c21e" stroke="#c99510" stroke-width="0.5"/><polygon transform="translate(9.00,0)" points="4,0.2 5.1,2.8 7.9,2.9 5.7,4.7 6.5,7.4 4,5.9 1.5,7.4 2.3,4.7 0.1,2.9 2.9,2.8" fill="#f5c21e" stroke="#c99510" stroke-width="0.5"/><polygon transform="translate(18.00,0)" points="4,0.2 5.1,2.8 7.9,2.9 5.7,4.7 6.5,7.4 4,5.9 1.5,7.4 2.3,4.7 0.1,2.9 2.9,2.8" fill="#f5c21e" stroke="#c99510" stroke-width="0.5"/><polygon transform="translate(27.00,0)" points="4,0.2 5.1,2.8 7.9,2.9 5.7,4.7 6.5,7.4 4,5.9 1.5,7.4 2.3,4.7 0.1,2.9 2.9,2.8" fill="#ececec" stroke="#cdcdcd" stroke-width="0.5"/><polygon transform="translate(36.00,0)" points="4,0.2 5.1,2.8 7.9,2.9 5.7,4.7 6.5,7.4 4,5.9 1.5,7.4 2.3,4.7 0.1,2.9 2.9,2.8" fill="#ececec" stroke="#cdcdcd" stroke-width="0.5"/></svg>
<div class="a" style="left:738px;top:369.0px;width:13px;height:13px;background:#7a9cc8"></div>
<svg style="left:767px;top:372.8px" width="15" height="4" viewBox="0 0 15 4"><circle cx="2.6" cy="2" r="1.6" fill="#5e5e5e"/><circle cx="7.4" cy="2" r="1.6" fill="#5e5e5e"/><circle cx="12.2" cy="2" r="1.6" fill="#5e5e5e"/></svg>
<div class="a" style="left:91px;top:404.0px;width:13px;height:13px;background:#fff;border:1.5px solid #626262"></div>
<div class="t" style="left:100px;width:33.5px;text-align:right;top:405.84px;font-size:12px;font-weight:bold">494</div>
<div class="t " style="left:184.4px;top:406.69px;font-size:11px;">01 Фев, 2020</div>
<div class="t " style="left:268.5px;top:406.69px;font-size:11px;">09 Фев, 2020</div>
<div class="t u" style="left:353.5px;top:399.89px;font-size:11px;color:#111">The category input</div>
<div class="t u" style="left:353.5px;top:412.89px;font-size:11px;color:#111">screen explained</div>
<div class="t u" style="left:472.6px;top:399.89px;font-size:11px;color:#111">Remote</div>
<div class="t u" style="left:472.6px;top:412.89px;font-size:11px;color:#111">Authenticatio...</div>
<div class="t " style="left:555.3px;top:399.89px;font-size:11px;color:#111">[2]</div>
<div class="a" style="left:738px;top:405.0px;width:13px;height:13px;background:#7a9cc8"></div>
<svg style="left:767px;top:408.8px" width="15" height="4" viewBox="0 0 15 4"><circle cx="2.6" cy="2" r="1.6" fill="#5e5e5e"/><circle cx="7.4" cy="2" r="1.6" fill="#5e5e5e"/><circle cx="12.2" cy="2" r="1.6" fill="#5e5e5e"/></svg>
<div class="a" style="left:91px;top:440.0px;width:13px;height:13px;background:#fff;border:1.5px solid #626262"></div>
<div class="t" style="left:100px;width:33.5px;text-align:right;top:441.84px;font-size:12px;font-weight:bold">495</div>
<div class="t " style="left:184.4px;top:442.69px;font-size:11px;">01 Фев, 2020</div>
<div class="t " style="left:268.5px;top:442.69px;font-size:11px;">01 Фев, 2020</div>
<div class="t u" style="left:353.5px;top:435.89px;font-size:11px;color:#111">User licensing</div>
<div class="t u" style="left:353.5px;top:448.89px;font-size:11px;color:#111">explained</div>
<div class="t u" style="left:472.6px;top:442.69px;font-size:11px;color:#111">Articles</div>
<div class="a" style="left:738px;top:441.0px;width:13px;height:13px;background:#7a9cc8"></div>
<svg style="left:767px;top:444.8px" width="15" height="4" viewBox="0 0 15 4"><circle cx="2.6" cy="2" r="1.6" fill="#5e5e5e"/><circle cx="7.4" cy="2" r="1.6" fill="#5e5e5e"/><circle cx="12.2" cy="2" r="1.6" fill="#5e5e5e"/></svg>
<div class="a" style="left:91px;top:476.0px;width:13px;height:13px;background:#fff;border:1.5px solid #626262"></div>
<div class="t" style="left:100px;width:33.5px;text-align:right;top:477.84px;font-size:12px;font-weight:bold">184</div>
<svg style="left:143px;top:476.5px" width="12" height="12" viewBox="0 0 12 12"><circle cx="6" cy="6" r="5" fill="none" stroke="#f0951c" stroke-width="1.2"/><circle cx="7" cy="4.9" r="1.7" fill="#f0951c"/><path d="M3.3 8.6 L6.2 5.8" stroke="#f0951c" stroke-width="1.5"/></svg>
<div class="t " style="left:184.4px;top:478.69px;font-size:11px;">07 Янв, 2008</div>
<div class="t " style="left:268.5px;top:478.69px;font-size:11px;">01 Фев, 2020</div>
<div class="t u" style="left:353.5px;top:471.89px;font-size:11px;color:#111">Remote Authentication</div>
<div class="t u" style="left:353.5px;top:484.89px;font-size:11px;color:#111">scenarios</div>
<div class="t u" style="left:472.6px;top:471.89px;font-size:11px;color:#111">Remote</div>
<div class="t u" style="left:472.6px;top:484.89px;font-size:11px;color:#111">Authenticatio...</div>
<svg style="left:584px;top:479.9px" width="46" height="8" viewBox="0 0 46 8"><polygon transform="translate(0.00,0)" points="4,0.2 5.1,2.8 7.9,2.9 5.7,4.7 6.5,7.4 4,5.9 1.5,7.4 2.3,4.7 0.1,2.9 2.9,2.8" fill="#f5c21e" stroke="#c99510" stroke-width="0.5"/><polygon transform="translate(9.00,0)" points="4,0.2 5.1,2.8 7.9,2.9 5.7,4.7 6.5,7.4 4,5.9 1.5,7.4 2.3,4.7 0.1,2.9 2.9,2.8" fill="#f5c21e" stroke="#c99510" stroke-width="0.5"/><polygon transform="translate(18.00,0)" points="4,0.2 5.1,2.8 7.9,2.9 5.7,4.7 6.5,7.4 4,5.9 1.5,7.4 2.3,4.7 0.1,2.9 2.9,2.8" fill="#f5c21e" stroke="#c99510" stroke-width="0.5"/><polygon transform="translate(27.00,0)" points="4,0.2 5.1,2.8 7.9,2.9 5.7,4.7 6.5,7.4 4,5.9 1.5,7.4 2.3,4.7 0.1,2.9 2.9,2.8" fill="#ececec" stroke="#cdcdcd" stroke-width="0.5"/><polygon transform="translate(36.00,0)" points="4,0.2 5.1,2.8 7.9,2.9 5.7,4.7 6.5,7.4 4,5.9 1.5,7.4 2.3,4.7 0.1,2.9 2.9,2.8" fill="#ececec" stroke="#cdcdcd" stroke-width="0.5"/></svg>
<div class="a" style="left:738px;top:477.0px;width:13px;height:13px;background:#7a9cc8"></div>
<svg style="left:767px;top:480.8px" width="15" height="4" viewBox="0 0 15 4"><circle cx="2.6" cy="2" r="1.6" fill="#5e5e5e"/><circle cx="7.4" cy="2" r="1.6" fill="#5e5e5e"/><circle cx="12.2" cy="2" r="1.6" fill="#5e5e5e"/></svg>
<div class="a" style="left:91px;top:506.5px;width:13px;height:13px;background:#fff;border:1.5px solid #626262"></div>
<div class="t" style="left:100px;width:33.5px;text-align:right;top:508.34px;font-size:12px;font-weight:bold">493</div>
<div class="t " style="left:184.4px;top:509.19px;font-size:11px;">03 Ноя, 2019</div>
<div class="t " style="left:268.5px;top:509.19px;font-size:11px;">03 Ноя, 2019</div>
<div class="t u" style="left:353.5px;top:509.19px;font-size:11px;color:#111">Drafts</div>
<div class="t u" style="left:472.6px;top:509.19px;font-size:11px;color:#111">Articles</div>
<div class="a" style="left:738px;top:507.5px;width:13px;height:13px;background:#7a9cc8"></div>
<svg style="left:767px;top:511.3px" width="15" height="4" viewBox="0 0 15 4"><circle cx="2.6" cy="2" r="1.6" fill="#5e5e5e"/><circle cx="7.4" cy="2" r="1.6" fill="#5e5e5e"/><circle cx="12.2" cy="2" r="1.6" fill="#5e5e5e"/></svg>
<div class="a" style="left:91px;top:537.0px;width:13px;height:13px;background:#fff;border:1.5px solid #626262"></div>
<div class="t" style="left:100px;width:33.5px;text-align:right;top:538.84px;font-size:12px;font-weight:bold">52</div>
<svg style="left:143px;top:537.5px" width="12" height="12" viewBox="0 0 12 12"><circle cx="6" cy="6" r="5" fill="none" stroke="#d8254b" stroke-width="1.2"/><circle cx="7" cy="4.9" r="1.7" fill="#d8254b"/><path d="M3.3 8.6 L6.2 5.8" stroke="#d8254b" stroke-width="1.5"/></svg>
<div class="t " style="left:184.4px;top:539.69px;font-size:11px;">01 Ноя, 2007</div>
<div class="t " style="left:268.5px;top:539.69px;font-size:11px;">03 Ноя, 2019</div>
<div class="t u" style="left:353.5px;top:539.69px;font-size:11px;color:#111">System requirements</div>
<div class="t u" style="left:472.6px;top:532.89px;font-size:11px;color:#111">Company A</div>
<div class="t u" style="left:472.6px;top:545.89px;font-size:11px;color:#111">documents</div>
<svg style="left:584px;top:540.9px" width="46" height="8" viewBox="0 0 46 8"><polygon transform="translate(0.00,0)" points="4,0.2 5.1,2.8 7.9,2.9 5.7,4.7 6.5,7.4 4,5.9 1.5,7.4 2.3,4.7 0.1,2.9 2.9,2.8" fill="#f5c21e" stroke="#c99510" stroke-width="0.5"/><polygon transform="translate(9.00,0)" points="4,0.2 5.1,2.8 7.9,2.9 5.7,4.7 6.5,7.4 4,5.9 1.5,7.4 2.3,4.7 0.1,2.9 2.9,2.8" fill="#ececec" stroke="#cdcdcd" stroke-width="0.5"/><polygon transform="translate(9.00,0)" points="4,0.2 4,5.9 1.5,7.4 2.3,4.7 0.1,2.9 2.9,2.8" fill="#f5c21e" stroke="#c99510" stroke-width="0.5"/><polygon transform="translate(18.00,0)" points="4,0.2 5.1,2.8 7.9,2.9 5.7,4.7 6.5,7.4 4,5.9 1.5,7.4 2.3,4.7 0.1,2.9 2.9,2.8" fill="#ececec" stroke="#cdcdcd" stroke-width="0.5"/><polygon transform="translate(27.00,0)" points="4,0.2 5.1,2.8 7.9,2.9 5.7,4.7 6.5,7.4 4,5.9 1.5,7.4 2.3,4.7 0.1,2.9 2.9,2.8" fill="#ececec" stroke="#cdcdcd" stroke-width="0.5"/><polygon transform="translate(36.00,0)" points="4,0.2 5.1,2.8 7.9,2.9 5.7,4.7 6.5,7.4 4,5.9 1.5,7.4 2.3,4.7 0.1,2.9 2.9,2.8" fill="#ececec" stroke="#cdcdcd" stroke-width="0.5"/></svg>
<div class="t" style="left:639px;width:90px;text-align:center;top:539.69px;font-size:11px">115</div>
<div class="a" style="left:738px;top:538.0px;width:13px;height:13px;background:#a7b9d3"></div>
<div class="a" style="left:619px;top:360.5px;width:169.5px;height:183px;background:#fff;border-radius:4px 4px 0 0;box-shadow:0 3px 9px rgba(0,0,0,0.3)"></div>
<svg style="left:770px;top:355px" width="10" height="6" viewBox="0 0 10 6"><path d="M0 6 L5 0.5 L10 6Z" fill="#fff"/></svg>
<div class="a" style="left:619px;top:407px;width:169.5px;height:1px;background:#e3e3e3"></div>
<div class="a" style="left:619px;top:451px;width:169.5px;height:1px;background:#e3e3e3"></div>
<div class="a" style="left:619px;top:474px;width:169.5px;height:1px;background:#e3e3e3"></div>
<div class="a" style="left:619px;top:518px;width:169.5px;height:1px;background:#e3e3e3"></div>
<div class="t " style="left:627.4px;top:371.02px;font-size:11.2px;color:#444">Просмотреть</div>
<div class="t " style="left:627.4px;top:391.82px;font-size:11.2px;color:#444">Публичный раздел</div>
<div class="t " style="left:627.4px;top:415.02px;font-size:11.2px;color:#444">Детали</div>
<div class="t " style="left:627.4px;top:435.82px;font-size:11.2px;color:#444">История: 2</div>
<div class="t " style="left:627.4px;top:458.52px;font-size:11.2px;color:#444">Клонировать</div>
<div class="t " style="left:627.4px;top:480.52px;font-size:11.2px;color:#444">Редактировать как черновик</div>
<div class="t " style="left:627.4px;top:502.52px;font-size:11.2px;color:#444">Редактировать</div>
<div class="t " style="left:627.4px;top:524.62px;font-size:11.2px;color:#444">Переместить в корзину</div>
<svg style="left:776px;top:350px" width="24" height="28" viewBox="0 0 24 28"><path d="M8.3 4 C8.3 1.5 12 1.5 12 4 V9.5 C12.3 7.6 15.5 7.6 15.6 9.8 V10.8 C16 9.2 18.8 9.3 18.9 11.4 V12.6 C19.4 11.3 21 11.5 21 13.3 V19 C21 22.5 19 25.4 15.5 25.4 H13.5 C10.5 25.4 8.5 23 6 20 L3.4 17 C2.4 15.8 3.8 14.2 5 15.1 L8.3 17.6 Z" fill="#fff" stroke="#151a28" stroke-width="1.5" stroke-linejoin="round"/><path d="M12 9.5 V13.8 M15.6 10.5 V13.8 M18.9 12.2 V14.2" stroke="#151a28" stroke-width="1"/></svg>
</body></html>
